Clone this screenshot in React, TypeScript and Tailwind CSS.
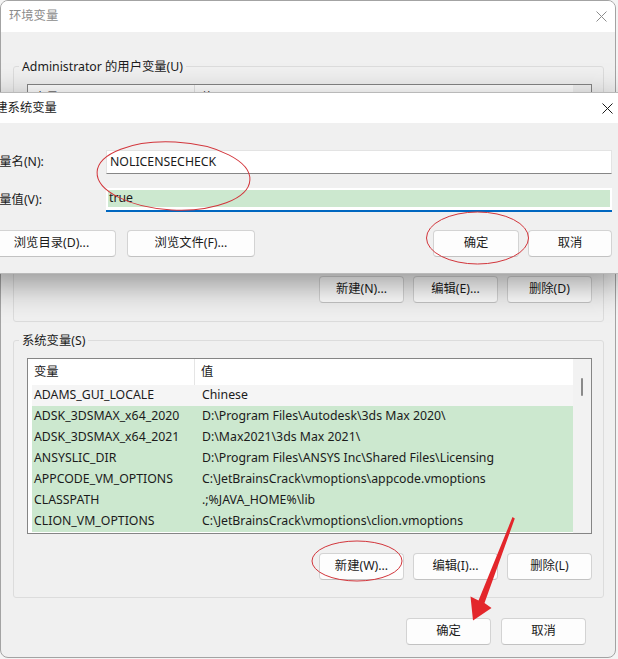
import type { ReactNode } from 'react'

const systemVars: [string, string][] = [
  ['ADAMS_GUI_LOCALE', 'Chinese'],
  ['ADSK_3DSMAX_x64_2020', 'D:\\Program Files\\Autodesk\\3ds Max 2020\\'],
  ['ADSK_3DSMAX_x64_2021', 'D:\\Max2021\\3ds Max 2021\\'],
  ['ANSYSLIC_DIR', 'D:\\Program Files\\ANSYS Inc\\Shared Files\\Licensing'],
  ['APPCODE_VM_OPTIONS', 'C:\\JetBrainsCrack\\vmoptions\\appcode.vmoptions'],
  ['CLASSPATH', '.;%JAVA_HOME%\\lib'],
  ['CLION_VM_OPTIONS', 'C:\\JetBrainsCrack\\vmoptions\\clion.vmoptions'],
]

function CloseIcon({ className }: { className: string }) {
  return (
    <svg width="11" height="11" viewBox="0 0 11 11" className={className}>
      <path d="M0.5 0.5 L10.5 10.5 M10.5 0.5 L0.5 10.5" stroke="currentColor" strokeWidth="1" fill="none" />
    </svg>
  )
}

function Button({ children, className = 'w-[85px]' }: { children: ReactNode; className?: string }) {
  return (
    <button
      className={`h-[27px] ${className} shrink-0 rounded-[4px] border border-[#d3d3d3] border-b-[#c2c2c2] bg-[#fdfdfd] text-[12.3px] text-[#1b1b1b]`}
    >
      {children}
    </button>
  )
}

function GroupBox({ label, children }: { label: string; children: ReactNode }) {
  return (
    <fieldset className="rounded-[3px] border border-[#dcdcdc] pl-[13px] pr-[11px]">
      <legend className="-ml-[8px] px-[3px] leading-[17px] text-[#1b1b1b]">{label}</legend>
      {children}
    </fieldset>
  )
}

function ListHeader() {
  return (
    <div className="flex h-[26px] items-center bg-white">
      <div className="flex h-full w-[167px] items-center border-r border-[#e5e5e5] pl-[6px]">变量</div>
      <div className="pl-[6px]">值</div>
    </div>
  )
}

function VarList({ rows, height }: { rows: [string, string][]; height: string }) {
  return (
    <div className={`flex ${height} border border-[#858585] bg-white`}>
      <div className="flex-1">
        <ListHeader />
        {rows.map(([name, value], i) => (
          <div
            key={name}
            className={`ml-[4px] flex h-[21px] items-center whitespace-nowrap ${i === 0 ? 'bg-[#f5f5f5]' : 'bg-[#cce8cf]'}`}
          >
            <div className="w-[164px] pl-[2px]">{name}</div>
            <div className="pl-[6px]">{value}</div>
          </div>
        ))}
      </div>
      <div className="relative w-[18px] bg-[#f2f2f2]">
        {rows.length > 0 && <div className="absolute left-[8px] top-[19px] h-[18px] w-[2px] rounded-full bg-[#8a8a8a]" />}
      </div>
    </div>
  )
}

function EditDialog() {
  return (
    <div className="absolute left-[-25px] top-[92px] w-[649px] border border-[#b9b9b9] bg-[#f0f0f0] shadow-[0_10px_32px_rgba(0,0,0,0.4)]">
      <div className="flex h-[30px] items-center justify-between bg-white pl-[7px] pr-[10px]">
        <span className="text-[#1b1b1b]">新建系统变量</span>
        <CloseIcon className="text-[#1b1b1b]" />
      </div>
      <div className="flex flex-col px-[11px] pb-[16px] pt-[27px]">
        <div className="flex items-center">
          <label className="w-[119px]">变量名(N):</label>
          <div className="flex h-[24px] flex-1 items-center border border-[#e3e3e3] border-b-[#868686] bg-white pl-[3px]">
            NOLICENSECHECK
          </div>
        </div>
        <div className="mt-[14px] flex items-center">
          <label className="w-[119px]">变量值(V):</label>
          <div className="flex h-[24px] flex-1 border-b-2 border-[#0067c0] bg-white px-[2px] pt-[2px] pb-[3px]">
            <div className="flex flex-1 items-center bg-[#cce8cf] pl-[1px]">true</div>
          </div>
        </div>
        <div className="mt-[18px] flex items-center">
          <Button className="w-[129px]">浏览目录(D)...</Button>
          <Button className="ml-[11px] w-[128px]">浏览文件(F)...</Button>
          <div className="flex-1" />
          <Button className="w-[86px]">确定</Button>
          <Button className="ml-[9px] w-[84px]">取消</Button>
        </div>
      </div>
    </div>
  )
}

function Annotations() {
  return (
    <svg width="618" height="659" className="pointer-events-none absolute left-0 top-0">
      <g fill="none" stroke="#d2353b" strokeWidth="1">
        <ellipse cx="173.5" cy="176" rx="76.5" ry="34" transform="rotate(3 173.5 176)" />
        <ellipse cx="477.5" cy="238" rx="51" ry="26" />
        <ellipse cx="357" cy="561" rx="45" ry="20" />
      </g>
      <polygon
        points="512.5,517 514.8,518.5 484.5,603 491.5,608 473,620.5 470.5,596.5 478.5,600.5"
        fill="#e3262b"
      />
    </svg>
  )
}

export default function App() {
  return (
    <div className="relative h-[659px] w-[618px] overflow-hidden bg-[#f4f4f4] text-[12.3px] text-[#1b1b1b] [font-family:'Noto_Sans','Noto_Sans_CJK_SC',sans-serif]">
      <div className="flex h-[658px] w-[616px] flex-col overflow-hidden rounded-[8px] border border-[#a3a3a3] bg-[#f0f0f0]">
        <div className="flex h-[31px] shrink-0 items-center justify-between bg-white pl-[8px] pr-[8px]">
          <span className="text-[#8c8c8c]">环境变量</span>
          <CloseIcon className="text-[#8c8c8c]" />
        </div>

        <div className="flex flex-col pl-[12px] pr-[11px] pt-[26px]">
          <GroupBox label="Administrator 的用户变量(U)">
            <div className="mt-[9px]">
              <VarList rows={[]} height="h-[180px]" />
            </div>
            <div className="mt-[12px] flex justify-end gap-[9px] pb-[18px]">
              <Button>新建(N)...</Button>
              <Button>编辑(E)...</Button>
              <Button>删除(D)</Button>
            </div>
          </GroupBox>

          <div className="mt-[10px]">
            <GroupBox label="系统变量(S)">
              <div className="mt-[9px]">
                <VarList rows={systemVars} height="h-[176px]" />
              </div>
              <div className="mt-[19px] flex justify-end gap-[9px] pb-[17px]">
                <Button>新建(W)...</Button>
                <Button>编辑(I)...</Button>
                <Button>删除(L)</Button>
              </div>
            </GroupBox>
          </div>
        </div>

        <div className="mt-[20px] flex justify-end gap-[10px] pr-[29px]">
          <Button>确定</Button>
          <Button>取消</Button>
        </div>
      </div>

      <EditDialog />
      <Annotations />
    </div>
  )
}
